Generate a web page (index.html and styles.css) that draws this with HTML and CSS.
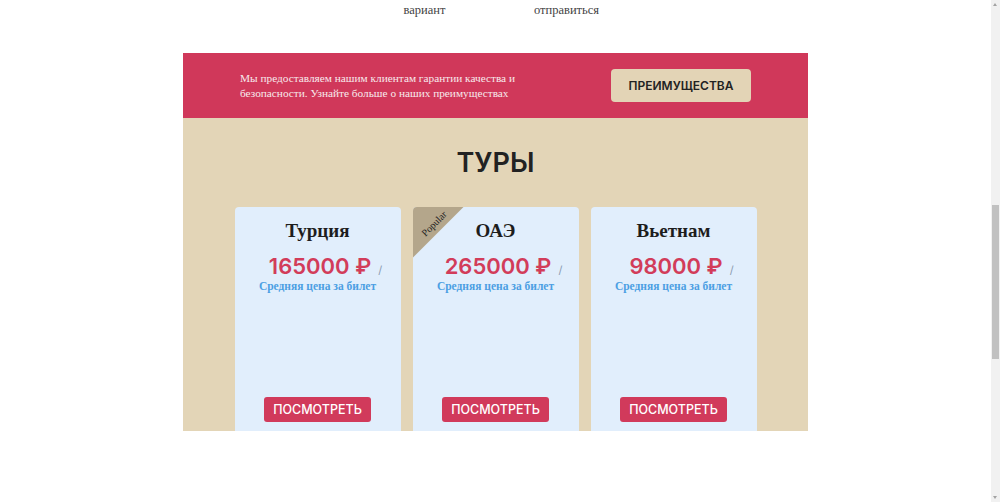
FILE: index.html
```html
<!DOCTYPE html>
<html lang="ru">
<head>
    <meta charset="UTF-8">
    <meta name="viewport" content="width=device-width, initial-scale=1.0">
    <title>Туры</title>
    <link rel="stylesheet" href="styles.css">
</head>
<body>
    <div class="page">
        <div class="steps">
            <div class="step"></div>
            <div class="step">вариант</div>
            <div class="step">отправиться</div>
            <div class="step"></div>
        </div>

        <div class="promo">
            <p class="promo-text">Мы предоставляем нашим клиентам гарантии качества и безопасности. Узнайте больше о наших преимуществах</p>
            <button class="promo-button">ПРЕИМУЩЕСТВА</button>
        </div>

        <div class="tours">
            <h2 class="tours-title">ТУРЫ</h2>
            <div class="cards">
                <div class="card">
                    <h3 class="card-title">Турция</h3>
                    <div class="price"><span class="price-value">165000 ₽</span><span class="price-slash">/</span></div>
                    <div class="price-note">Средняя цена за билет</div>
                    <button class="card-button">ПОСМОТРЕТЬ</button>
                </div>
                <div class="card">
                    <div class="ribbon"><span>Popular</span></div>
                    <h3 class="card-title">ОАЭ</h3>
                    <div class="price"><span class="price-value">265000 ₽</span><span class="price-slash">/</span></div>
                    <div class="price-note">Средняя цена за билет</div>
                    <button class="card-button">ПОСМОТРЕТЬ</button>
                </div>
                <div class="card">
                    <h3 class="card-title">Вьетнам</h3>
                    <div class="price"><span class="price-value">98000 ₽</span><span class="price-slash">/</span></div>
                    <div class="price-note">Средняя цена за билет</div>
                    <button class="card-button">ПОСМОТРЕТЬ</button>
                </div>
            </div>
        </div>
    </div>

    <div class="scrollbar">
        <div class="scroll-up"></div>
        <div class="scroll-thumb"></div>
        <div class="scroll-down"></div>
    </div>
</body>
</html>
```
FILE: styles.css
```css
body {
    margin: 0;
    font-family: "Liberation Serif", "DejaVu Serif", serif;
    background: #fff;
    color: #333;
}
.page {
    width: 991px;
}
.steps {
    height: 20px;
    padding-top: 3px;
    box-sizing: border-box;
    display: flex;
    justify-content: center;
}
.step {
    width: 142px;
    text-align: center;
    font-size: 12.5px;
    line-height: 15px;
    color: #444;
}
.promo {
    width: 625px;
    margin: 33px auto 0;
    box-sizing: border-box;
    height: 65px;
    padding: 0 57px;
    background: #d0385a;
    display: flex;
    align-items: center;
    justify-content: space-between;
}
.promo-text {
    margin: 0;
    width: 285px;
    font-size: 11.3px;
    line-height: 15px;
    color: #f7e9ec;
}
.promo-button {
    width: 140px;
    height: 33px;
    border: none;
    border-radius: 4px;
    background: #e3d4b6;
    color: #222;
    font-family: Inter, "DejaVu Sans", sans-serif;
    font-size: 12px;
    font-weight: 600;
    cursor: pointer;
}
.tours {
    width: 625px;
    margin: 0 auto;
    height: 313px;
    overflow: hidden;
    background: #e3d5b7;
}
.tours-title {
    margin: 0;
    padding-top: 28px;
    height: 61px;
    text-align: center;
    font-family: Inter, "DejaVu Sans", sans-serif;
    font-size: 27px;
    font-weight: 600;
    line-height: 34px;
    color: #222;
}
.cards {
    display: flex;
    justify-content: center;
    gap: 12px;
}
.card {
    position: relative;
    width: 166px;
    height: 230px;
    box-sizing: border-box;
    padding-top: 12px;
    background: #e1eefc;
    border-radius: 4px;
    display: flex;
    flex-direction: column;
    align-items: center;
    overflow: hidden;
}
.card-title {
    margin: 0;
    font-size: 19px;
    font-weight: bold;
    line-height: 24px;
    color: #1d1d1d;
}
.price {
    margin-top: 10px;
    padding-left: 16px;
    display: flex;
    align-items: baseline;
}
.price-value {
    font-family: Inter, "DejaVu Sans", sans-serif;
    font-size: 22px;
    font-weight: 600;
    color: #d23c5a;
}
.price-slash {
    margin-left: 7px;
    font-family: Inter, "DejaVu Sans", sans-serif;
    font-size: 11px;
    color: #8a9bb0;
}
.price-note {
    margin-top: 1px;
    font-size: 11.5px;
    font-weight: bold;
    color: #4c9fe3;
}
.card-button {
    margin-top: 105px;
    width: 107px;
    height: 25px;
    border: none;
    border-radius: 3px;
    background: #d13a5b;
    color: #fff;
    font-family: Inter, "DejaVu Sans", sans-serif;
    font-size: 12.5px;
    font-weight: 500;
    cursor: pointer;
}
.ribbon {
    position: absolute;
    top: 0;
    left: 0;
    width: 51px;
    height: 51px;
    background: #b4a68b;
    clip-path: polygon(0 0, 100% 0, 0 100%);
}
.ribbon span {
    position: absolute;
    top: 11px;
    left: -2px;
    width: 46px;
    text-align: center;
    font-size: 10px;
    color: #222;
    transform: rotate(-45deg);
}
.scrollbar {
    position: fixed;
    top: 0;
    right: 0;
    width: 9px;
    height: 100%;
    background: #f1f1f1;
}
.scroll-up,
.scroll-down {
    position: absolute;
    left: 2px;
    width: 0;
    height: 0;
    border-left: 2.5px solid transparent;
    border-right: 2.5px solid transparent;
}
.scroll-up {
    top: 3px;
    border-bottom: 3px solid #a3a3a3;
}
.scroll-down {
    bottom: 3px;
    border-top: 3px solid #a3a3a3;
}
.scroll-thumb {
    position: absolute;
    top: 205px;
    left: 1px;
    width: 7px;
    height: 154px;
    background: #c1c1c1;
}
```
